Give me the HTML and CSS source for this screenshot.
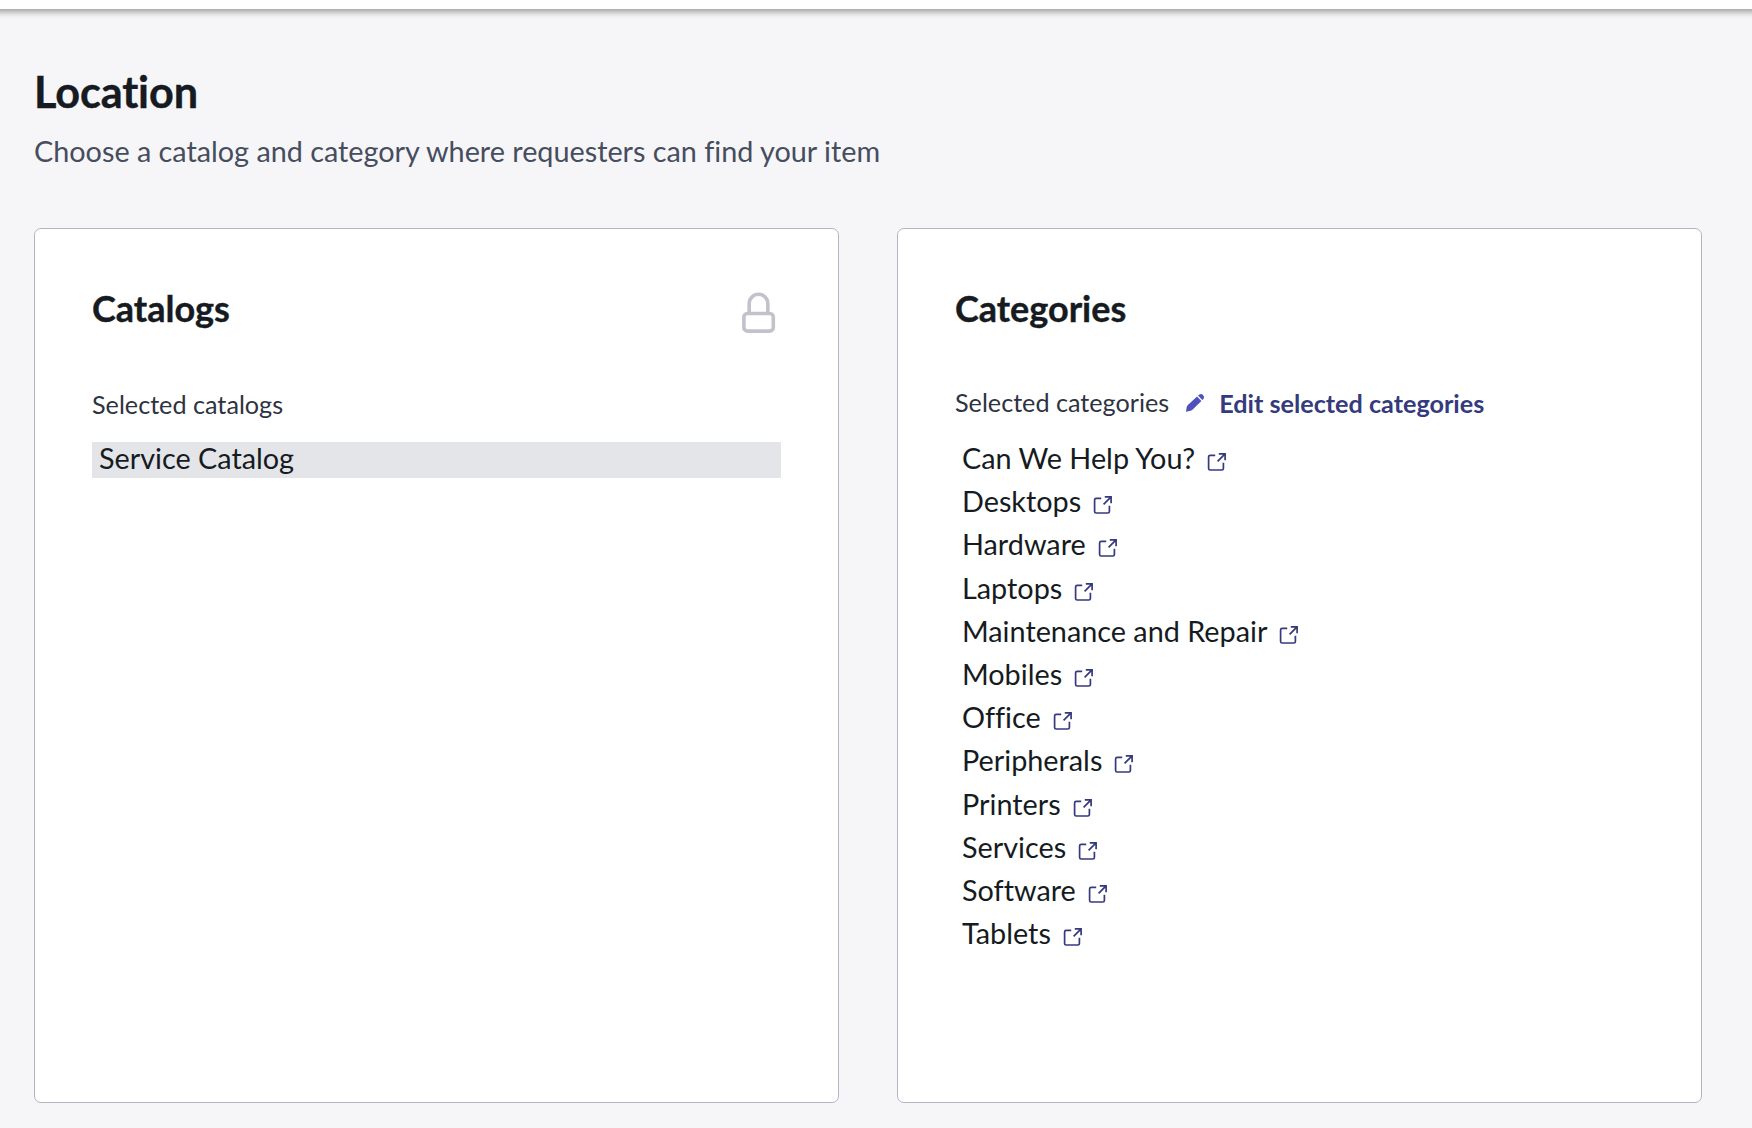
FILE: index.html
```html
<!DOCTYPE html>
<html lang="en">
<head>
<meta charset="utf-8">
<title>Location</title>
<link rel="stylesheet" href="styles.css">
</head>
<body>
<svg class="sprite" aria-hidden="true">
  <symbol id="open" viewBox="0 0 20 20">
    <path d="M8.2 3.4H3.2Q1.6 3.4 1.6 5V16.4Q1.6 18 3.2 18H14.8Q16.4 18 16.4 16.4V10.8M10.6 9.4L17.8 2.2M11.8 1.9H18.1V8.2" fill="none" stroke="currentColor" stroke-width="1.7"/>
  </symbol>
</svg>
<header class="topbar"></header>
<main class="page">
  <h1 class="title">Location</h1>
  <p class="subtitle">Choose a catalog and category where requesters can find your item</p>
  <div class="cards">
    <section class="card">
      <div class="card-head">
        <h2 class="heading">Catalogs</h2>
        <svg class="lock" viewBox="0 0 34 42"><path d="M7.2 21V11.5a9.3 9.3 0 0 1 18.6 0V21" fill="none" stroke="currentColor" stroke-width="3.6"/><rect x="1.9" y="21.5" width="29.4" height="17.6" rx="3.6" fill="none" stroke="currentColor" stroke-width="3.6"/></svg>
      </div>
      <div class="label-row label-row-catalogs"><span class="label">Selected catalogs</span></div>
      <div class="catalog">Service Catalog</div>
    </section>
    <section class="card">
      <div class="card-head"><h2 class="heading">Categories</h2></div>
      <div class="label-row">
        <span class="label">Selected categories</span>
        <svg class="pencil" viewBox="0 0 20 20"><path d="M1 18.8L1.7 14Q2 12.8 2.9 12L12 3.5L16.4 8L7.7 16.6Q6.8 17.5 5.6 17.8ZM13 2.6L14.4 1.4Q16.2.3 17.8 1.7Q19.9 3.5 18.7 5.7L17.3 7.1Z" fill="currentColor"/></svg>
        <a class="edit">Edit selected categories</a>
      </div>
      <ul class="items">
        <li>Can We Help You?<svg class="open"><use href="#open"/></svg></li>
        <li>Desktops<svg class="open"><use href="#open"/></svg></li>
        <li>Hardware<svg class="open"><use href="#open"/></svg></li>
        <li>Laptops<svg class="open"><use href="#open"/></svg></li>
        <li>Maintenance and Repair<svg class="open"><use href="#open"/></svg></li>
        <li>Mobiles<svg class="open"><use href="#open"/></svg></li>
        <li>Office<svg class="open"><use href="#open"/></svg></li>
        <li>Peripherals<svg class="open"><use href="#open"/></svg></li>
        <li>Printers<svg class="open"><use href="#open"/></svg></li>
        <li>Services<svg class="open"><use href="#open"/></svg></li>
        <li>Software<svg class="open"><use href="#open"/></svg></li>
        <li>Tablets<svg class="open"><use href="#open"/></svg></li>
      </ul>
    </section>
  </div>
</main>
</body>
</html>
```
FILE: styles.css
```css
* { box-sizing: border-box; }
body {
  margin: 0;
  height: 1128px;
  overflow: hidden;
  background: #f6f6f8;
  color: #161b22;
  font-family: Lato, "Liberation Sans", sans-serif;
  font-size: 28.8px;
  font-variant-ligatures: none;
}
h1, h2, p, ul { margin: 0; padding: 0; }
.sprite { display: none; }
.topbar {
  height: 9px;
  margin: 0 -20px;
  background: #fff;
  box-shadow: 0 3px 6px rgba(0, 0, 0, .37);
}
.page { padding: 56px 50px 0 34px; }
.title { font-size: 43.2px; line-height: 52px; font-weight: 700; letter-spacing: -.1px; -webkit-text-stroke: .4px; }
.subtitle { margin-top: 13px; line-height: 43px; color: #464d5e; letter-spacing: -.01px; }
.cards { display: flex; gap: 58px; margin-top: 55px; }
.card {
  width: 805px;
  height: 875px;
  padding: 56px 57px 0;
  background: #fff;
  border: 1px solid #b3b5c3;
  border-radius: 7px;
}
.card-head { display: flex; justify-content: space-between; height: 58px; }
.heading { font-size: 36px; line-height: 46px; font-weight: 700; -webkit-text-stroke: .4px; }
.lock { width: 34px; height: 42px; margin: 7px 5px 0 0; color: #c1c2cb; }
.label-row {
  display: flex;
  align-items: flex-start;
  height: 94px;
  padding-top: 43px;
  font-size: 25.2px;
  line-height: 32px;
}
.label-row-catalogs { height: 99px; padding-top: 45px; }
.label { color: #2e3341; }
.pencil { width: 20px; height: 20px; margin: 7px 14px 0 16px; color: #4f52bd; }
.edit { padding-top: 1px; font-weight: 700; color: #343a7c; }
.catalog {
  height: 36px;
  padding-left: 7px;
  line-height: 32px;
  background: #e4e5e9;
}
.items { list-style: none; padding-left: 7px; }
.items li { display: flex; align-items: flex-start; height: 43.2px; line-height: 43.2px; }
.open { width: 20px; height: 20px; margin: 15px 0 0 12px; color: #343a7c; }
```
